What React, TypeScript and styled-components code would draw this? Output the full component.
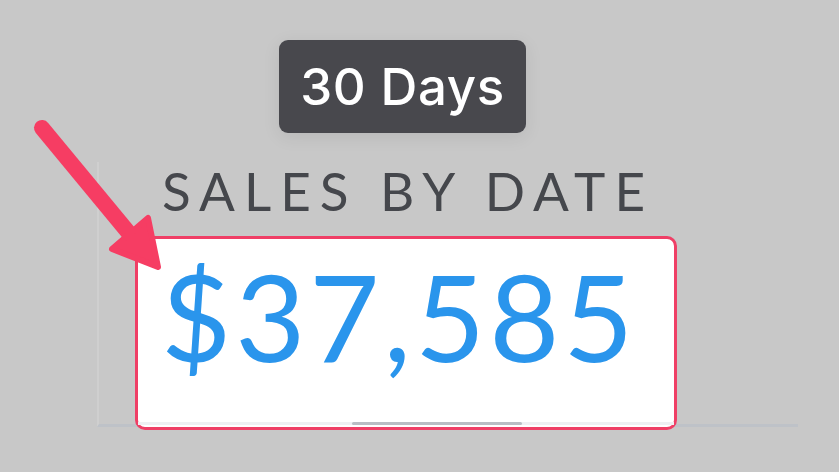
import React from 'react';
import styled, { createGlobalStyle } from 'styled-components';

const GlobalStyle = createGlobalStyle`
  html, body {
    margin: 0;
    padding: 0;
    background: #c8c8c8;
  }
`;

const App = () => {
  return (
    <>
      <GlobalStyle />
      <Page>
        <Tooltip>30 Days</Tooltip>
        <Chart>
          <Title>SALES BY DATE</Title>
          <Highlight>
            <Amount>$37,585</Amount>
            <ScrollTrack>
              <ScrollThumb />
            </ScrollTrack>
          </Highlight>
        </Chart>
        <Arrow width="200" height="180" viewBox="0 0 200 180">
          <line x1="42" y1="128" x2="128" y2="232" stroke="#f63d63" strokeWidth="16" strokeLinecap="round" />
          <polygon
            points="158,267 112,249 148,218"
            fill="#f63d63"
            stroke="#f63d63"
            strokeWidth="6"
            strokeLinejoin="round"
          />
        </Arrow>
      </Page>
    </>
  );
};

const Page = styled.div`
  position: relative;
  width: 839px;
  height: 472px;
  overflow: hidden;
  padding-top: 40px;
  box-sizing: border-box;
  background: #c8c8c8;
`;

const Tooltip = styled.div`
  margin-left: 279px;
  width: 247px;
  height: 93px;
  box-sizing: border-box;
  display: flex;
  align-items: center;
  justify-content: center;
  border-radius: 9px;
  background: #48484d;
  color: #ffffff;
  font-family: Inter, 'Liberation Sans', sans-serif;
  font-size: 51px;
  font-weight: 500;
  letter-spacing: 0.6px;
  box-shadow: 0 4px 18px rgba(0, 0, 0, 0.08);
`;

const Chart = styled.div`
  margin-top: 29px;
  margin-left: 97px;
  width: 701px;
  height: 265px;
  box-sizing: border-box;
  border-left: 2px solid #cfcfcf;
  border-bottom: 3px solid #bec2c8;
  display: flex;
  flex-direction: column;
`;

const Title = styled.div`
  margin-left: 63px;
  margin-top: -6px;
  height: 70px;
  margin-bottom: 10px;
  font-family: Lato, 'Liberation Sans', sans-serif;
  font-size: 53px;
  line-height: 70px;
  letter-spacing: 9px;
  color: #45474c;
  white-space: nowrap;
`;

const Highlight = styled.div`
  position: relative;
  z-index: 1;
  margin-left: 36px;
  margin-bottom: -6px;
  width: 542px;
  height: 197px;
  box-sizing: border-box;
  border: 3px solid #ef3f66;
  border-radius: 10px;
  background: #ffffff;
  display: flex;
  flex-direction: column;
  padding: 0 0 2px;
`;

const Amount = styled.div`
  margin-left: 23px;
  margin-top: 12px;
  font-family: Lato, 'Liberation Sans', sans-serif;
  font-size: 121px;
  line-height: 130px;
  letter-spacing: 4px;
  color: #2a95ec;
  white-space: nowrap;
`;

const ScrollTrack = styled.div`
  margin-top: auto;
  height: 3px;
  background: #eef0f3;
  display: flex;
`;

const ScrollThumb = styled.div`
  margin-left: 214px;
  width: 170px;
  border-radius: 2px;
  background: #b9bdc4;
`;

const Arrow = styled.svg`
  position: absolute;
  left: 0;
  top: 0;
  z-index: 2;
  overflow: visible;
`;

export default App;
